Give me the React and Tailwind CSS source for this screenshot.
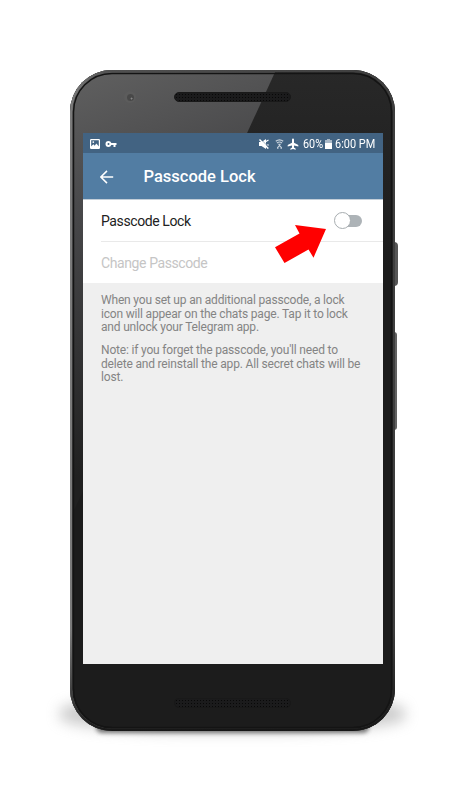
function StatusBar() {
  return (
    <div className="flex h-5 items-center bg-[#426382] pt-px pr-[7px] pl-[7px] text-white">
      <svg className="h-[10px] w-[10px]" viewBox="0 0 10 10">
        <rect x=".6" y=".6" width="8.8" height="8.8" rx=".6" fill="none" stroke="#fff" strokeWidth="1.2" />
        <path d="M1 9V7.500L3.400 5.200l1.300 1.500 1.600-2.200L9 7.500V9z" fill="#fff" />
        <circle cx="3.300" cy="3.100" r=".9" fill="#fff" />
      </svg>
      <svg className="ml-[4.500px] h-3 w-3" viewBox="0 0 24 24" fill="currentColor">
        <path d="M12.650 10A6 6 0 0 0 7 6a6 6 0 0 0 0 12 6 6 0 0 0 5.650-4H17v4h4v-4h2v-4zM7 14a2 2 0 1 1 0-4 2 2 0 0 1 0 4z" />
      </svg>
      <div className="ml-auto flex items-center">
        <svg className="h-[10px] w-[10px]" viewBox="0 0 10 10">
          <path d="M0 3h2.500L7 0v10L2.500 7H0z" fill="#fff" />
          <path d="M7 2.500 9.500 1M7.500 6h2.300" stroke="#fff" strokeWidth="1.100" />
          <path d="M1.500 0 10 8.500" stroke="#426382" strokeWidth=".6" />
          <path d="M.500.600 9.300 9.600" stroke="#fff" strokeWidth="1.400" />
        </svg>
        <svg className="ml-[6px] h-[10px] w-[9px]" viewBox="0 0 9 10" fill="none" stroke="#c8d2dc">
          <path d="M.800 2.200Q4.500-.600 8.200 2.200M2 4Q4.500 2 7 4" strokeWidth="1.200" />
          <path d="M3.200 5.300h2.600M4.500 5v2M2.300 8.800 4.500 6.600l2.200 2.200M2 9.300h1.500M5.500 9.300H7" strokeWidth="1.100" />
        </svg>
        <svg className="ml-[3px] h-[12px] w-[12px]" viewBox="0 0 12 12" fill="currentColor">
          <path d="M5 1.500a1 1 0 0 1 2 0v3.300L11.300 7v1.600L7 7.400v2.200l1.700 1.100v1L6 11.100l-2.700.6v-1L5 9.600V7.400L.700 8.600V7L5 4.800z" />
        </svg>
        <span className="ml-[3.500px] w-[20.500px] text-[12px] leading-5 whitespace-nowrap"><span className="inline-block origin-left scale-x-[.9]">60%</span></span>
        <svg className="ml-[1.500px] h-[10px] w-[7px]" viewBox="0 0 7 10">
          <path d="M2 0h3v1h2v3.500H0V1h2z" fill="#a9b8c7" />
          <path d="M0 4h7v5.500a.5.5 0 0 1-.5.5h-6a.5.5 0 0 1-.5-.5z" fill="#fff" />
        </svg>
        <span className="ml-[3.500px] w-[41px] text-[12px] leading-5 whitespace-nowrap"><span className="inline-block origin-left scale-x-[.91]">6:00 PM</span></span>
      </div>
    </div>
  );
}

function Header() {
  return (
    <div className="flex h-[47px] items-center border-b border-[#c3ced8] bg-[#527da3] pt-[2px] pl-[17px] text-white">
      <svg className="h-[14px] w-[14px]" viewBox="0 0 14 14" fill="none" stroke="currentColor" strokeWidth="1.5">
        <path d="M13.200 7H1.200M7 .9.900 7 7 13.100" />
      </svg>
      <h1 className="ml-[29.500px] text-[16.500px] leading-5 font-medium whitespace-nowrap">Passcode Lock</h1>
    </div>
  );
}

function Toggle() {
  return (
    <div className="relative flex h-[17px] w-7 items-center">
      <div className="ml-2 h-[12px] w-5 rounded-full bg-[#adb3b7]" />
      <div className="absolute left-0 h-[17px] w-[17px] rounded-full border-[1.500px] border-[#a7adb0] bg-white" />
    </div>
  );
}

function Screen() {
  return (
    <div className="relative flex h-[531px] w-[300px] flex-col bg-[#efefef]">
      <StatusBar />
      <Header />
      <div className="h-[83px] bg-white pl-[18px]">
        <div className="flex h-[42px] items-center justify-between border-b border-[#e9e9e9] pr-[21px] text-[#212121]">
          <span className="pt-[2px] text-[14px] tracking-[-0.400px]">Passcode Lock</span>
          <Toggle />
        </div>
        <div className="flex h-[41px] items-center pt-px text-[14px] tracking-[-0.400px] text-[#c5c5c5]">Change Passcode</div>
      </div>
      <div className="px-[18px] pt-[11px] text-[12px] leading-[13.600px] tracking-[-0.180px] whitespace-nowrap text-[#848484]">
        <p>When you set up an additional passcode, a lock<br />icon will appear on the chats page. Tap it to lock<br />and unlock your Telegram app.</p>
        <p className="mt-[9.500px]">Note: if you forget the passcode, you'll need to<br />delete and reinstall the app. All secret chats will be<br />lost.</p>
      </div>
      <svg className="absolute top-[92px] left-[192px] h-[39px] w-[51px]" viewBox="0 0 51 39">
        <path d="M0 22.300 24.500 8.500 20 0 51 4 38.500 32.700 33.500 24.500 9.500 38z" fill="#f00" />
      </svg>
    </div>
  );
}

function Speaker() {
  return <div className="h-[10px] w-[117px] rounded-full border border-[#191919] bg-[#1b1b1c] bg-[radial-gradient(#080808_0.8px,transparent_1px)] bg-[size:3px_3px]" />;
}

export default function App() {
  return (
    <div className="relative h-[800px] w-[467px] overflow-hidden bg-white pt-[70px] pl-[70px] font-[Roboto,sans-serif]">
      <div className="absolute top-[696px] left-[60px] h-[36px] w-[345px] rounded-[40%] bg-[#999] opacity-50 blur-[7px]" />
      <div className="absolute top-[721px] left-[96px] h-[12px] w-[273px] rounded-full bg-[#444] opacity-70 blur-[2px]" />
      <div className="absolute top-[242px] left-[394px] h-11 w-1 rounded-r-sm bg-[#555]" />
      <div className="absolute top-[332px] left-[394px] h-[98px] w-[3px] rounded-r-sm bg-[#626262]" />
      <div className="relative flex h-[661px] w-[325px] flex-col overflow-hidden rounded-[42px] bg-[#1c1c1c]">
        <svg className="absolute inset-0 h-full w-full" viewBox="0 0 325 661">
          <defs>
            <linearGradient id="glass" gradientUnits="userSpaceOnUse" x1="10" y1="0" x2="140" y2="360">
              <stop offset="0" stopColor="#606060" />
              <stop offset=".38" stopColor="#464648" />
              <stop offset="1" stopColor="#202020" />
            </linearGradient>
            <linearGradient id="edge" gradientUnits="userSpaceOnUse" x1="0" y1="0" x2="325" y2="0">
              <stop offset="0" stopColor="#7c7c7c" />
              <stop offset=".12" stopColor="#505050" />
              <stop offset="1" stopColor="#3e3e3e" />
            </linearGradient>
            <linearGradient id="base" gradientUnits="userSpaceOnUse" x1="0" y1="560" x2="0" y2="661">
              <stop offset="0" stopColor="#111" stopOpacity="0" />
              <stop offset="1" stopColor="#111" stopOpacity=".9" />
            </linearGradient>
            <linearGradient id="night" x1="0" y1="0" x2="0" y2="1">
              <stop offset="0" stopColor="#282828" />
              <stop offset=".3" stopColor="#1c1c1c" />
            </linearGradient>
          </defs>
          <rect width="325" height="661" fill="url(#night)" />
          <path d="M0 0h206L0 449z" fill="url(#glass)" />
          <rect x="1" y="1" width="323" height="659" rx="41" fill="none" stroke="url(#edge)" strokeWidth="2.500" />
          <rect x="1" y="1" width="323" height="659" rx="41" fill="none" stroke="url(#base)" strokeWidth="2.500" />
          <rect x="3.500" y="3.500" width="318" height="654" rx="38.500" fill="none" stroke="#141414" strokeWidth="1.500" />
        </svg>
        <div className="relative flex h-[63px] shrink-0 justify-center pt-[22px]">
          <Speaker />
          <div className="absolute top-[21px] left-[54px] flex h-3 w-3 items-center justify-center rounded-full bg-[#5c5c5c]">
            <div className="h-[7px] w-[7px] rounded-full bg-[radial-gradient(circle_at_65%_65%,#888_0.6px,#484848_1.3px)]" />
          </div>
        </div>
        <div className="ml-[13px]"><Screen /></div>
        <div className="relative flex h-[67px] shrink-0 justify-center pt-[34px]"><Speaker /></div>
      </div>
    </div>
  );
}
